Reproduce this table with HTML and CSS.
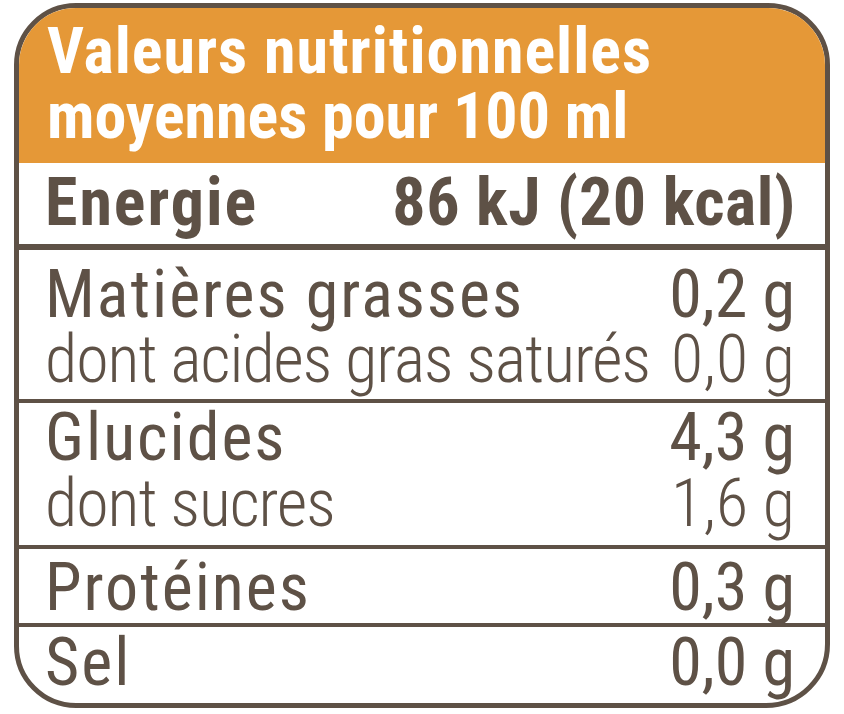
FILE: index.html
```html
<!DOCTYPE html>
<html lang="fr">
<head>
<meta charset="utf-8">
<title>Valeurs nutritionnelles</title>
<link rel="stylesheet" href="styles.css">
</head>
<body>
<div class="label">
  <div class="head"><span class="head-l1">Valeurs nutritionnelles</span><br><span class="head-l2">moyennes pour 100 ml</span></div>
  <div class="row energy">
    <div class="line"><span class="name">Energie</span><span class="val">86 kJ (20 kcal)</span></div>
  </div>
  <div class="row fat">
    <div class="line main"><span class="name">Matières grasses</span><span class="val">0,2 g</span></div>
    <div class="line sub"><span class="name">dont acides gras saturés</span><span class="val">0,0 g</span></div>
  </div>
  <div class="row carbs">
    <div class="line main"><span class="name">Glucides</span><span class="val">4,3 g</span></div>
    <div class="line sub"><span class="name">dont sucres</span><span class="val">1,6 g</span></div>
  </div>
  <div class="row protein">
    <div class="line main"><span class="name">Protéines</span><span class="val">0,3 g</span></div>
  </div>
  <div class="row salt">
    <div class="line main"><span class="name">Sel</span><span class="val">0,0 g</span></div>
  </div>
</div>
</body>
</html>
```
FILE: styles.css
```css
html, body {
  margin: 0;
  padding: 0;
  background: #ffffff;
}

.label {
  box-sizing: border-box;
  width: 816px;
  height: 705px;
  margin: 3px 0 0 14px;
  border: 5px solid #5e5146;
  border-radius: 62px 62px 64px 62px;
  overflow: hidden;
  font-family: "Roboto Condensed", "Liberation Sans Narrow", "DejaVu Sans Condensed", Roboto, sans-serif;
  font-stretch: condensed;
  color: #5e5146;
  display: flex;
  flex-direction: column;
}

.head {
  height: 155px;
  box-sizing: border-box;
  padding: 11px 0 0 28px;
  background: #e59837;
  color: #ffffff;
  font-weight: 700;
  font-size: 64px;
  line-height: 65px;
}
.head-l1 {
  letter-spacing: 1px;
}

.row {
  padding: 0 30px 0 26px;
  box-sizing: content-box;
}

.line {
  display: flex;
  justify-content: space-between;
  font-size: 66px;
  line-height: 65px;
  white-space: nowrap;
}

.energy {
  height: 74px;
  padding-top: 7px;
}
.energy .line {
  font-weight: 700;
}
.energy .name {
  letter-spacing: 2px;
}
.energy .val {
  letter-spacing: 0.6px;
  margin-right: -1px;
}

.main {
  font-weight: 400;
}
.main .name {
  letter-spacing: 2px;
}
.sub {
  font-weight: 300;
}
.sub .name {
  letter-spacing: -1px;
}

.fat {
  border-top: 6px solid #5e5146;
  height: 137px;
  padding-top: 12px;
}

.carbs {
  border-top: 4px solid #5e5146;
  height: 140px;
  padding-top: 2px;
}
.carbs .sub {
  line-height: 67px;
}

.protein {
  border-top: 4px solid #5e5146;
  height: 68px;
  padding-top: 6px;
}

.salt {
  border-top: 4px solid #5e5146;
  height: 73px;
  padding-top: 3px;
}
```
